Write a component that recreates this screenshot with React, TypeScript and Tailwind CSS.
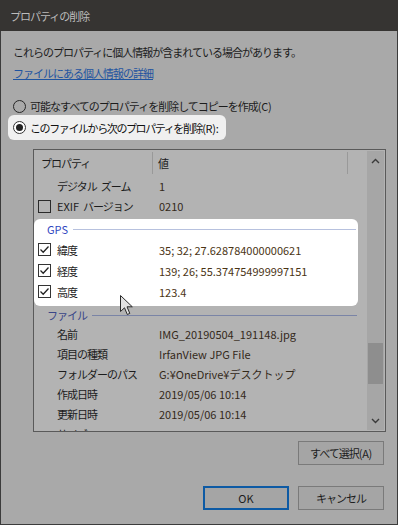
const font = "font-['Noto_Sans_CJK_JP','Noto_Sans',sans-serif]";

function L({ children }: { children: React.ReactNode }) {
  return <span className="tracking-[-0.3px]">{children}</span>;
}

function Check({ checked, dim }: { checked?: boolean; dim?: boolean }) {
  return (
    <span
      className={`w-[13px] h-[13px] border flex items-center justify-center shrink-0 ${
        dim ? "border-[#2a2a2a] bg-[#b3b3b3]" : "border-[#333333] bg-white"
      }`}
    >
      {checked && (
        <svg width="11" height="11" viewBox="0 0 11 11">
          <path d="M1.5 5.5 L4.2 8.2 L9.5 2.5" fill="none" stroke="#222" strokeWidth="1.3" />
        </svg>
      )}
    </span>
  );
}

function Row({
  label,
  value,
  check,
  checked,
  dim = true,
  h = "h-[20px]",
}: {
  label: React.ReactNode;
  value: string;
  check?: boolean;
  checked?: boolean;
  dim?: boolean;
  h?: string;
}) {
  return (
    <div className={`flex items-center ${h} shrink-0 whitespace-nowrap`}>
      <div className="w-[125px] flex items-center shrink-0">
        {check ? (
          <>
            <span className="ml-[4px]">
              <Check checked={checked} dim={dim} />
            </span>
            <span className="ml-[6px] text-[#1c1c1c]">{label}</span>
          </>
        ) : (
          <span className="ml-[23px] text-[#1c1c1c]">{label}</span>
        )}
      </div>
      <span className={`tracking-normal ${dim ? "text-[#33291a]" : "text-[#4a3414]"}`}>{value}</span>
    </div>
  );
}

function Chevron({ up }: { up?: boolean }) {
  return (
    <svg width="9" height="6" viewBox="0 0 9 6">
      <path
        d={up ? "M1 5 L4.5 1.5 L8 5" : "M1 1 L4.5 4.5 L8 1"}
        fill="none"
        stroke="#3a3a3a"
        strokeWidth="1.4"
      />
    </svg>
  );
}

export default function App() {
  return (
    <div className={`relative w-[398px] h-[525px] bg-[#a9a9a9] border-x border-b border-[#3b3b3b] flex flex-col text-[11px] tracking-[-1px] leading-[16px] whitespace-nowrap ${font}`}>
      {/* Title bar */}
      <div className="h-[31px] shrink-0 bg-[#363432] text-[#bcbcbc] pl-[10px] flex items-center -mx-px">
        プロパティの削除
      </div>

      <div className="flex flex-col pl-[12px] pt-[13px]">
        <p className="h-[16px] text-[#1c1c1c]">これらのプロパティに個人情報が含まれている場合があります。</p>
        <a className="mt-[5px] h-[16px] text-[#1f54a0] underline self-start">ファイルにある個人情報の詳細</a>

        {/* Radios */}
        <div className="mt-[17px] h-[16px] flex items-center gap-[4px] text-[#1c1c1c]">
          <span className="w-[13px] h-[13px] rounded-full border border-[#262626] bg-[#a9a9a9]" />
          <span>
            可能なすべてのプロパティを削除してコピーを作成<L>(C)</L>
          </span>
        </div>
        <div className="mt-[1px] -ml-[5px] w-[218px] h-[25px] rounded-[6px] bg-[#f0f0f0] flex items-center pl-[5px] gap-[4px] text-[#111]">
          <span className="w-[13px] h-[13px] rounded-full border border-[#333] bg-white flex items-center justify-center">
            <span className="w-[7px] h-[7px] rounded-full bg-[#222]" />
          </span>
          <span className="tracking-[-1.4px]">
            このファイルから次のプロパティを削除<L>(R):</L>
          </span>
        </div>

        {/* List */}
        <div className="mt-[9px] ml-[20px] w-[353px] h-[283px] border border-[#5a5a5a] bg-[#b3b3b3] flex">
          <div className="flex-1 flex flex-col overflow-hidden">
            <div className="h-[26px] flex shrink-0 text-[#1c1c1c]">
              <div className="w-[119px] border-r border-[#999] pl-[7px] flex items-center my-[2px]">プロパティ</div>
              <div className="w-[195px] border-r border-[#999] pl-[5px] flex items-center my-[2px]">値</div>
            </div>
            <Row
              label={
                <>
                  デジタル<span className="ml-[4px]">ズーム</span>
                </>
              }
              value="1"
            />
            <Row
              label={
                <>
                  <span className="tracking-normal">EXIF</span>
                  <span className="ml-[4px]">バージョン</span>
                </>
              }
              value="0210"
              check
            />
            <div className="h-[3px] shrink-0" />

            {/* Highlighted GPS group */}
            <div className="w-[324px] bg-white rounded-[6px] flex flex-col pb-[4px] shrink-0">
              <div className="h-[20px] flex items-center">
                <span className="pl-[13px] tracking-normal text-[#3047bf]">GPS</span>
                <span className="flex-1 h-px bg-[#b7c1de] ml-[5px] mr-[2px]" />
              </div>
              <Row label="緯度" value="35; 32; 27.628784000000621" check checked dim={false} h="h-[21px]" />
              <Row label="経度" value="139; 26; 55.374754999997151" check checked dim={false} h="h-[21px]" />
              <Row label="高度" value="123.4" check checked dim={false} h="h-[21px]" />
            </div>

            <div className="h-[18px] shrink-0 flex items-center">
              <span className="pl-[13px] text-[#3a4688]">ファイル</span>
              <span className="flex-1 h-px bg-[#7a84a6] ml-[5px] mr-[10px]" />
            </div>
            <Row label="名前" value="IMG_20190504_191148.jpg" />
            <Row label="項目の種類" value="IrfanView JPG File" />
            <Row label="フォルダーのパス" value="G:¥OneDrive¥デスクトップ" />
            <Row label="作成日時" value="2019/05/06 10:14" />
            <Row label="更新日時" value="2019/05/06 10:14" />
            <Row label="サイズ" value="" />
          </div>

          {/* Scrollbar */}
          <div className="w-[17px] my-px mr-px bg-[#a6a6a6] flex flex-col items-center">
            <div className="h-[19px] flex items-center justify-center shrink-0">
              <Chevron up />
            </div>
            <div className="h-[173px] shrink-0" />
            <div className="w-[15px] h-[41px] bg-[#8e8e8e] shrink-0" />
            <div className="flex-1" />
            <div className="h-[19px] flex items-center justify-center shrink-0">
              <Chevron />
            </div>
          </div>
        </div>

        {/* Buttons */}
        <button className="mt-[9px] ml-[285px] w-[86px] h-[24px] border border-[#7a7a7a] bg-[#a5a5a5] text-[#1c1c1c] flex items-center justify-center">
          <span>
            すべて選択<L>(A)</L>
          </span>
        </button>
        <div className="mt-[21px] ml-[190px] flex gap-[9px]">
          <button className="w-[86px] h-[24px] border-2 border-[#0d5aa4] bg-[#a5a5a5] text-[#1c1c1c] tracking-normal flex items-center justify-center">
            OK
          </button>
          <button className="w-[86px] h-[24px] border border-[#7a7a7a] bg-[#a5a5a5] text-[#1c1c1c] flex items-center justify-center">
            キャンセル
          </button>
        </div>
      </div>

      {/* Mouse cursor */}
      <svg className="absolute left-[119px] top-[295px]" width="14" height="21" viewBox="0 0 14 21">
        <path
          d="M0.5 0.5 L0.5 16.5 L4.5 12.8 L7.3 19.5 L9.8 18.4 L7 11.8 L12.3 11.8 Z"
          fill="#e2e2e2"
          stroke="#2a2a2a"
          strokeWidth="1"
        />
      </svg>
    </div>
  );
}
